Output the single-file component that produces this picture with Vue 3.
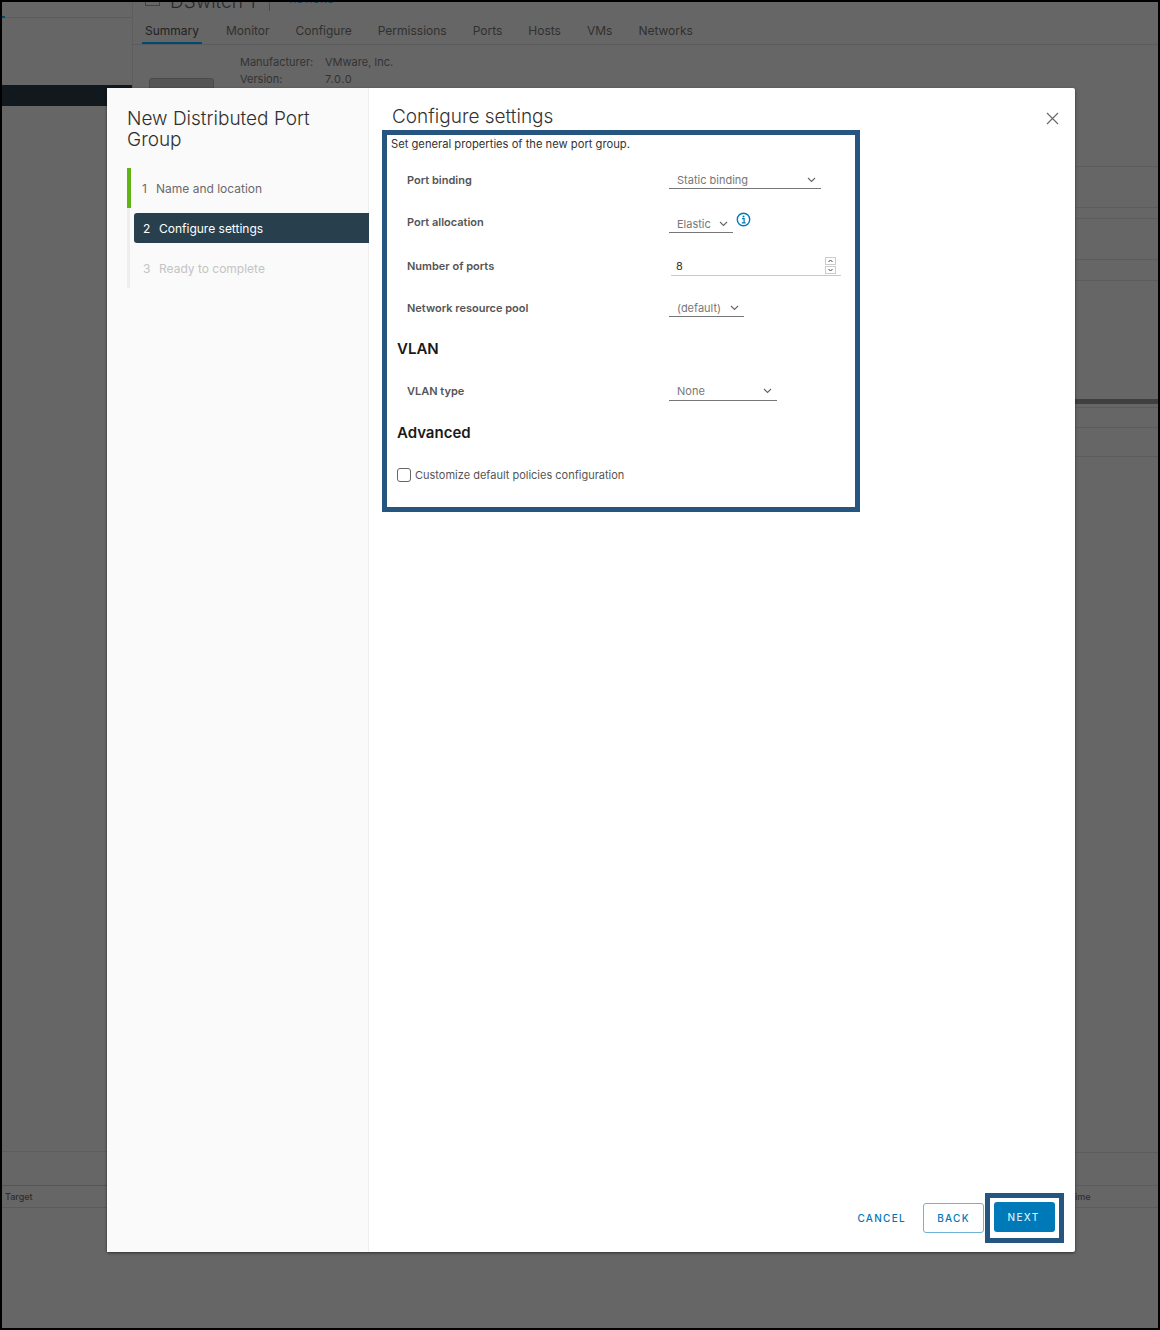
<script setup>
const tabs = ['Summary', 'Monitor', 'Configure', 'Permissions', 'Ports', 'Hosts', 'VMs', 'Networks']
const bgRows = [
  { h: 122, cls: 'first' }, { h: 41 }, { h: 11 }, { h: 41 }, { h: 21 }, { h: 123, cls: 'thick' }, { h: 4 }, { h: 20 }, { h: 29 },
  { h: 696 }, { h: 33 }, { h: 22, text: 'ime' }
]
</script>

<template>
  <div class="frame">
    <aside class="bg-side">
      <div class="bg-side-top"><span class="bg-tick"></span></div>
      <div class="bg-side-bar"></div>
      <div class="bg-side-fill"></div>
      <div class="bg-side-row"></div>
      <div class="bg-side-target">Target</div>
    </aside>
    <main class="bg-main">
      <div class="bg-head">
        <span class="bg-icon"></span><span class="bg-title">DSwitch 1</span><span class="bg-sep"></span><span class="bg-action">ACTIONS</span>
      </div>
      <nav class="bg-tabs">
        <span v-for="(t, i) in tabs" :key="t" class="bg-tab" :class="{ on: i === 0 }">{{ t }}</span>
      </nav>
      <div class="bg-info">
        <div class="bg-thumb"></div>
        <dl class="bg-dl">
          <dt>Manufacturer:</dt><dd>VMware, Inc.</dd>
          <dt>Version:</dt><dd class="ver">7.0.0</dd>
        </dl>
      </div>
      <div
        v-for="(r, i) in bgRows"
        :key="i"
        class="bg-row"
        :class="r.cls"
        :style="{ height: r.h + 'px' }"
      >{{ r.text }}</div>
    </main>

    <section class="modal">
      <div class="wizard">
        <h2 class="wizard-title">New Distributed Port Group</h2>
        <ol class="steps">
          <li class="step done"><span class="num">1</span>Name and location</li>
          <li class="step active"><span class="num">2</span>Configure settings</li>
          <li class="step off"><span class="num">3</span>Ready to complete</li>
        </ol>
      </div>
      <div class="pane">
        <header class="pane-head">
          <h3 class="pane-title">Configure settings</h3>
          <svg class="close" width="13" height="13" viewBox="0 0 13 13" aria-label="Close">
            <path d="M1 1l11 11M12 1L1 12" fill="none" stroke="#6a6a6a" stroke-width="1.2" />
          </svg>
        </header>
        <div class="mark form-box">
          <p class="intro">Set general properties of the new port group.</p>
          <div class="row r1">
            <label>Port binding</label>
            <div class="select w152"><span>Static binding</span><svg class="chev" width="9" height="6" viewBox="0 0 9 6"><path d="M1 1l3.5 3.5L8 1" /></svg></div>
          </div>
          <div class="row r2">
            <label>Port allocation</label>
            <div class="select w64 low"><span>Elastic</span><svg class="chev" width="9" height="6" viewBox="0 0 9 6"><path d="M1 1l3.5 3.5L8 1" /></svg></div>
            <svg class="info" width="15" height="15" viewBox="0 0 15 15">
              <circle cx="7.5" cy="7.5" r="6.2" fill="none" stroke="#0079b8" stroke-width="1.4" />
              <circle cx="7.5" cy="4.5" r="1" fill="#0079b8" />
              <path d="M6 6.6h2.1v4M5.8 10.8h3.8" fill="none" stroke="#0079b8" stroke-width="1.2" />
            </svg>
          </div>
          <div class="row r3">
            <label>Number of ports</label>
            <div class="number">
              <span>8</span>
              <span class="spin">
                <svg width="11" height="8" viewBox="0 0 11 8"><rect x=".5" y=".5" width="10" height="7" fill="#fff" stroke="#ccc" /><path d="M3.5 5l2-2 2 2" fill="none" stroke="#444" /></svg>
                <svg width="11" height="8" viewBox="0 0 11 8"><rect x=".5" y=".5" width="10" height="7" fill="#fff" stroke="#ccc" /><path d="M3.5 3l2 2 2-2" fill="none" stroke="#444" /></svg>
              </span>
            </div>
          </div>
          <div class="row r4">
            <label>Network resource pool</label>
            <div class="select w75"><span>(default)</span><svg class="chev" width="9" height="6" viewBox="0 0 9 6"><path d="M1 1l3.5 3.5L8 1" /></svg></div>
          </div>
          <h4 class="section s1">VLAN</h4>
          <div class="row r5">
            <label>VLAN type</label>
            <div class="select w108 tall"><span>None</span><svg class="chev" width="9" height="6" viewBox="0 0 9 6"><path d="M1 1l3.5 3.5L8 1" /></svg></div>
          </div>
          <h4 class="section s2">Advanced</h4>
          <div class="check"><span class="box"></span>Customize default policies configuration</div>
        </div>
        <footer class="foot">
          <span class="btn link">CANCEL</span>
          <span class="btn outline">BACK</span>
          <div class="mark next-box"><span class="btn primary">NEXT</span></div>
        </footer>
      </div>
    </section>
  </div>
</template>

<style>
html, body { margin: 0; background: #000; }
</style>

<style scoped>
.frame {
  position: relative;
  width: 1160px;
  height: 1330px;
  box-sizing: border-box;
  border: 2px solid #000;
  background: #666;
  overflow: hidden;
  display: flex;
  font-family: Inter, "Liberation Sans", sans-serif;
  color: #333;
}
.bg-side { width: 130px; flex: none; display: flex; flex-direction: column; }
.bg-side-top { height: 15px; border-bottom: 1px solid #5c5c5c; position: relative; flex: none; }
.bg-tick { position: absolute; left: 0; bottom: -1px; width: 3px; height: 2px; background: #004a70; }
.bg-side-bar { height: 21px; margin-top: 67px; background: #11191e; flex: none; }
.bg-side-fill { height: 1045px; flex: none; border-bottom: 1px solid #5d5d5d; }
.bg-side-row { height: 33px; border-bottom: 1px solid #545454; flex: none; }
.bg-side-target { height: 22px; border-bottom: 1px solid #5a5a5a; font-size: 9px; line-height: 22px; color: #2f2f2f; padding-left: 3px; box-sizing: border-box; font-weight: 500; flex: none; }
.bg-main { flex: 1; min-width: 0; display: flex; flex-direction: column; }
.bg-head { height: 14px; position: relative; padding-left: 12px; display: flex; align-items: flex-start; overflow: hidden; border-left: 1px solid #5e5e5e; flex: none; }
.bg-icon { width: 15px; height: 6px; box-sizing: border-box; border: 1px solid #2e4a5a; margin: -2px 10px 0 0; flex: none; }
.bg-title { font-size: 19px; line-height: 24px; margin-top: -12px; font-weight: 300; color: #2a2a2a; flex: none; }
.bg-sep { width: 1px; height: 9px; background: #4c4c4c; margin: 0 20px 0 13px; flex: none; }
.bg-action { font-size: 9px; color: #00456a; line-height: 10px; margin-top: -7px; letter-spacing: 0.6px; flex: none; }
.bg-tabs { height: 28px; display: flex; gap: 26px; padding-left: 13px; border-bottom: 1px solid #5c5c5c; border-left: 1px solid #5e5e5e; font-size: 12px; color: #303030; flex: none; }
.bg-tab { line-height: 30px; height: 28px; }
.bg-tab.on { box-shadow: inset 0 -2px 0 #004a70; color: #222; margin: 0 -2px 0 -4px; padding: 0 3px; }
.bg-info { height: 0; position: relative; flex: none; }
.bg-thumb { position: absolute; left: 17px; top: 33px; width: 65px; height: 14px; background: #555; border: 1px solid #4a4a4a; border-radius: 3px; box-sizing: border-box; }
.bg-dl { position: absolute; left: 108px; top: 9px; margin: 0; display: grid; grid-template-columns: 85px auto; font-size: 11px; line-height: 17px; color: #333; }
.bg-dl dd { margin: 0; }
.bg-dl .ver { letter-spacing: 0.6px; }
.bg-row { flex: none; box-sizing: border-box; border-bottom: 1px solid #5c5c5c; padding-left: 943px; font-size: 9px; line-height: 22px; font-weight: 500; color: #2f2f2f; }
.bg-row.first { border-left: 1px solid #5e5e5e; }
.bg-row.thick { border-bottom: 5px solid #3f3f3f; }

.modal {
  position: absolute;
  left: 105px;
  top: 86px;
  width: 968px;
  height: 1164px;
  background: #fff;
  display: flex;
  border-radius: 2px;
  box-shadow: 0 1px 3px rgba(0, 0, 0, 0.55);
}
.wizard { background: #fafafa; border-right: 1px solid #eee; padding: 20px 0 0 20px; flex: none; box-sizing: border-box; width: 262px; }
.wizard-title { margin: 0 0 18px; font-size: 19px; line-height: 21px; font-weight: 300; color: #2f2f2f; width: 200px; }
.steps { list-style: none; margin: 0; padding: 0; border-left: 3px solid #eee; height: 120px; box-sizing: border-box; }
.step { display: flex; align-items: center; height: 30px; font-size: 12px; padding-left: 9px; margin-bottom: 10px; position: relative; color: #666; }
.step .num { width: 16px; flex: none; }
.step.done { height: 40px; margin-bottom: 5px; padding-left: 12px; color: #6a6a6a; }
.step.done::before { content: ""; position: absolute; left: -3px; top: 0; width: 4px; height: 40px; background: #60b515; }
.step.done .num { width: 14px; }
.step.active { margin-left: 4px; margin-right: -1px; background: #28404d; color: #fff; border-radius: 3px 0 0 3px; }
.step.off { color: #c4c4c4; margin-left: 4px; }

.pane { flex: 1; min-width: 0; display: flex; flex-direction: column; }
.pane-head { height: 42px; position: relative; padding-left: 23px; flex: none; }
.pane-title { margin: 0; padding-top: 18px; font-size: 19px; line-height: 22px; font-weight: 300; color: #333; }
.close { position: absolute; right: 16px; top: 24px; }
.mark { border: 5px solid #26567f; box-sizing: border-box; background: #fff; }
.form-box { width: 478px; height: 382px; margin-left: 13px; position: relative; padding: 0 0 0 5px; flex: none; }
.intro { margin: 0 0 0 -1px; padding-top: 4px; font-size: 11.2px; line-height: 10px; height: 24px; color: #333; }
.row { display: flex; align-items: flex-end; padding-left: 15px; position: relative; }
.row label { width: 262px; flex: none; font-size: 11px; font-weight: 600; color: #555; line-height: 14px; padding-bottom: 2px; }
.select { position: relative; display: flex; align-items: center; justify-content: space-between; box-sizing: border-box; height: 18px; padding: 0 5px 0 8px; border-bottom: 1px solid #777; font-size: 11px; color: #777; }
.select.tall { height: 19px; padding-bottom: 1px; }
.chev { fill: none; stroke: #666; stroke-width: 1.1; flex: none; }
.w152 { width: 152px; }
.w64 { width: 64px; }
.w75 { width: 75px; }
.w108 { width: 108px; }
.row.r1 { height: 26px; }
.row.r2 { height: 44px; }
.row.r2 label { position: relative; top: -2px; }
.row.r3 { height: 43px; }
.row.r3 label { position: relative; top: -1px; }
.row.r4 { height: 41px; }
.info { margin-left: 3px; margin-bottom: 6px; }
.number { margin-left: 2px; width: 170px; height: 20px; box-sizing: border-box; border-bottom: 1px solid #c8c8c8; display: flex; align-items: center; justify-content: space-between; padding: 0 5px; font-size: 11px; color: #333; }
.spin { display: flex; flex-direction: column; gap: 1px; }
.spin svg { display: block; }
.section { margin: 0; padding-left: 5px; font-size: 15px; font-weight: 600; color: #1a1a1a; line-height: 20px; }
.section.s1 { margin-top: 22px; }
.section.s2 { margin-top: 22px; }
.row.r5 { height: 22px; margin-top: 20px; }
.row.r5 label { position: relative; top: -1px; }
.check { display: flex; align-items: center; margin-top: 25px; padding-left: 5px; font-size: 11px; color: #555; }
.box { width: 14px; height: 14px; box-sizing: border-box; border: 1px solid #666; border-radius: 3px; margin-right: 4px; flex: none; background: #fff; }

.foot { margin-top: auto; display: flex; align-items: center; justify-content: flex-end; padding: 0 11px 9px 0; }
.btn { display: flex; align-items: center; justify-content: center; box-sizing: border-box; height: 30px; font-size: 10px; font-weight: 500; letter-spacing: 1.3px; color: #0079b8; }
.btn.link { margin-right: 17px; }
.btn.outline { width: 61px; border: 1px solid #71b3d6; border-radius: 3px; margin-right: 1px; }
.next-box { width: 79px; height: 50px; padding: 4px 4px 0; display: flex; justify-content: center; align-items: flex-start; }
.btn.primary { width: 61px; background: #0079b8; color: #d9edf7; border-radius: 3px; padding-right: 2px; }
</style>
